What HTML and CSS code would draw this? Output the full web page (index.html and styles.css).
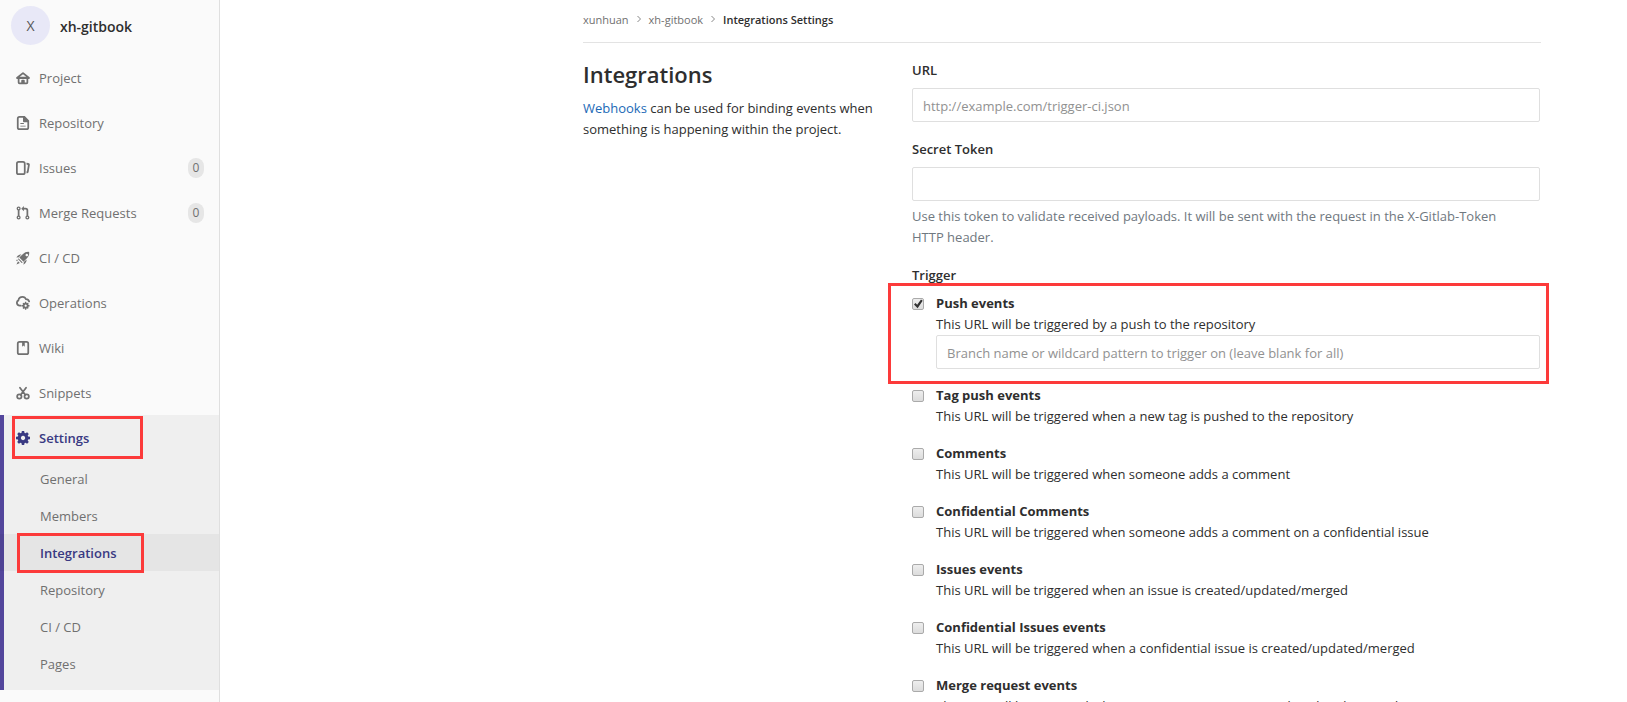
FILE: index.html
```html
<!DOCTYPE html>
<html lang="en">
<head>
<meta charset="utf-8">
<title>Integrations Settings · xh-gitbook</title>
<link rel="stylesheet" href="styles.css">
</head>
<body>
<div class="layout">
  <aside class="sidebar">
    <a class="project-header" href="#"><span class="avatar">X</span><span class="project-name">xh-gitbook</span></a>
    <nav>
      <ul class="menu">
        <li><a class="menu-link" href="#"><svg class="icon" viewBox="0 0 16 16"><path fill-rule="evenodd" d="M8.7 1.6 15.6 7.2Q16.4 8.6 15 9H14v4a2 2 0 0 1-2 2H4a2 2 0 0 1-2-2V9H1Q-.4 8.6.4 7.2L7.3 1.6Q8 1.1 8.7 1.6ZM4.3 6.7h7.4L8 3.7ZM4 9v4h2v-2q0-1 1-1h2q1 0 1 1v2h2V9Z"/></svg>Project</a></li>
        <li><a class="menu-link" href="#"><svg class="icon" viewBox="0 0 16 16"><path fill-rule="evenodd" d="M4 0h6l5 5v8a3 3 0 0 1-3 3H4a3 3 0 0 1-3-3V3a3 3 0 0 1 3-3Zm0 2a1 1 0 0 0-1 1v10q0 1 1 1h8q1 0 1-1V7H9a1 1 0 0 1-1-1V2ZM5 8h4v1H5Zm0 3h6v1H5Z"/></svg>Repository</a></li>
        <li><a class="menu-link" href="#"><svg class="icon" viewBox="0 0 16 16"><path fill-rule="evenodd" d="M3 0h5a3 3 0 0 1 3 3v10a3 3 0 0 1-3 3H3a3 3 0 0 1-3-3V3a3 3 0 0 1 3-3Zm0 2a1 1 0 0 0-1 1v10q0 1 1 1h5q1 0 1-1V3q0-1-1-1ZM12 2l2 .4a2 2 0 0 1 1.7 2.4l-1.3 7.7A2 2 0 0 1 12 14v-2.1q.5 0 .6-.7l1-6q.1-.8-.7-1L12 4Z"/></svg>Issues<span class="count">0</span></a></li>
        <li><a class="menu-link" href="#"><svg class="icon" viewBox="0 0 16 16"><g fill="none" stroke="currentColor" stroke-width="1.5"><circle cx="3" cy="2.8" r="1.6"/><circle cx="3" cy="13.2" r="1.6"/><circle cx="13" cy="13.2" r="1.6"/></g><path d="M2 4.5h2v7H2ZM9 0v2h2a3 3 0 0 1 3 3v6.5h-2V5q0-1-1-1H9v2L6 3Z"/></svg>Merge Requests<span class="count">0</span></a></li>
        <li><a class="menu-link" href="#"><svg class="icon" viewBox="0 0 16 16"><path fill-rule="evenodd" d="M8 3.3Q10.8.6 15 1q.6 4.2-2.2 7L8.6 12.2 3.8 7.4ZM12.3 3.1a1.5 1.5 0 1 0 .1 0ZM4 4.2l2.2-.4L3.3 7 .4 7.5Q1.8 5 4 4.2ZM12.2 9.8l-.4 2.2q-.8 2.2-3.3 3.6L9 12.7ZM2.8 8.3l4.9 4.9-1.2.4-4.1-4.1ZM2.3 11.6l2.1 2.1-3.9 1.8ZM.2 10.7l1-1 .9.9-1 1Z"/></svg>CI / CD</a></li>
        <li><a class="menu-link" href="#"><svg class="icon" viewBox="0 0 16 16"><path fill="none" stroke="currentColor" stroke-width="2" stroke-linecap="round" d="M5.5 11H4.2A3.2 3.2 0 0 1 2.7 5Q3.5 1 7.5 1 10.4 1 11.4 3.7 14.3 3.7 15 6.3"/><path fill-rule="evenodd" d="M10.3 6.7h1.4l.4 1.5 1.3-.6 1.1 1.1-.7 1.3 1.6.4v1.5l-1.6.4.7 1.4-1.1 1-1.3-.6-.4 1.6h-1.4l-.4-1.6-1.4.7-1-1.1.7-1.4-1.6-.4v-1.5l1.6-.4-.7-1.3 1-1.1 1.4.6Zm.7 3.1a1.3 1.3 0 1 0 .1 0Z"/></svg>Operations</a></li>
        <li><a class="menu-link" href="#"><svg class="icon" viewBox="0 0 16 16"><path fill-rule="evenodd" d="M4 0h8a3 3 0 0 1 3 3v10a3 3 0 0 1-3 3H4a3 3 0 0 1-3-3V3a3 3 0 0 1 3-3Zm0 2a1 1 0 0 0-1 1v10q0 1 1 1h8q1 0 1-1V3q0-1-1-1h-2v4.5L8.5 5 7 6.5V2Z"/></svg>Wiki</a></li>
        <li><a class="menu-link" href="#"><svg class="icon" viewBox="0 0 16 16"><g fill="none" stroke="currentColor" stroke-width="2"><circle cx="3.8" cy="12" r="2.5"/><circle cx="12.2" cy="12" r="2.5"/><path stroke-linecap="round" d="M4.5 2 10.6 10M11.5 2 5.4 10"/></g></svg>Snippets</a></li>
        <li class="section-active">
          <a class="menu-link current marked" href="#"><svg class="icon" viewBox="0 0 16 16"><path fill-rule="evenodd" d="M6.7 0h2.6l.5 2.2 1 .4 1.9-1.2 1.9 1.9-1.2 1.9.4 1 2.2.5v2.6l-2.2.5-.4 1 1.2 1.9-1.9 1.9-1.9-1.2-1 .4-.5 2.2H6.7l-.5-2.2-1-.4-1.9 1.2-1.9-1.9 1.2-1.9-.4-1L0 9.3V6.7l2.2-.5.4-1-1.2-1.9 1.9-1.9 1.9 1.2 1-.4ZM8 5.5a2.5 2.5 0 1 0 .1 0Z"/></svg>Settings</a>
          <ul class="submenu">
            <li><a href="#">General</a></li>
            <li><a href="#">Members</a></li>
            <li><a class="current marked" href="#">Integrations</a></li>
            <li><a href="#">Repository</a></li>
            <li><a href="#">CI / CD</a></li>
            <li><a href="#">Pages</a></li>
          </ul>
        </li>
      </ul>
    </nav>
  </aside>

  <main class="content">
    <nav class="breadcrumbs" aria-label="Breadcrumb">
      <a href="#">xunhuan</a>
      <svg class="chevron" viewBox="0 0 6 8"><path d="M1.5 1 4.5 4 1.5 7"/></svg>
      <a href="#">xh-gitbook</a>
      <svg class="chevron" viewBox="0 0 6 8"><path d="M1.5 1 4.5 4 1.5 7"/></svg>
      <span class="here">Integrations Settings</span>
    </nav>
    <div class="settings">
      <section class="intro">
        <h1>Integrations</h1>
        <p><a href="#">Webhooks</a> can be used for binding events when something is happening within the project.</p>
      </section>
      <form class="hook-form">
        <div class="field">
          <label class="field-label" for="url">URL</label>
          <input class="text-box" id="url" type="text" placeholder="http://example.com/trigger-ci.json">
        </div>
        <div class="field">
          <label class="field-label" for="token">Secret Token</label>
          <input class="text-box" id="token" type="text">
          <p class="help">Use this token to validate received payloads. It will be sent with the request in the X-Gitlab-Token HTTP header.</p>
        </div>
        <fieldset class="triggers">
          <legend class="field-label">Trigger</legend>
          <div class="event marked">
            <input type="checkbox" id="push" checked>
            <div class="event-body"><label for="push">Push events</label><p>This URL will be triggered by a push to the repository</p>
              <input class="text-box" type="text" aria-label="Branch filter" placeholder="Branch name or wildcard pattern to trigger on (leave blank for all)"></div>
          </div>
          <div class="event"><input type="checkbox" id="tag"><div class="event-body"><label for="tag">Tag push events</label><p>This URL will be triggered when a new tag is pushed to the repository</p></div></div>
          <div class="event"><input type="checkbox" id="comments"><div class="event-body"><label for="comments">Comments</label><p>This URL will be triggered when someone adds a comment</p></div></div>
          <div class="event"><input type="checkbox" id="conf-comments"><div class="event-body"><label for="conf-comments">Confidential Comments</label><p>This URL will be triggered when someone adds a comment on a confidential issue</p></div></div>
          <div class="event"><input type="checkbox" id="issues"><div class="event-body"><label for="issues">Issues events</label><p>This URL will be triggered when an issue is created/updated/merged</p></div></div>
          <div class="event"><input type="checkbox" id="conf-issues"><div class="event-body"><label for="conf-issues">Confidential Issues events</label><p>This URL will be triggered when a confidential issue is created/updated/merged</p></div></div>
          <div class="event"><input type="checkbox" id="merge"><div class="event-body"><label for="merge">Merge request events</label><p>This URL will be triggered when a merge request is created/updated/merged</p></div></div>
        </fieldset>
      </form>
    </div>
  </main>
</div>
</body>
</html>
```
FILE: styles.css
```css
*, *::before, *::after { box-sizing: border-box; }
body {
  margin: 0;
  background: #fff;
  color: #2e2e2e;
  font: 13px/21px "Open Sans", "Noto Sans", sans-serif;
}
a { color: inherit; text-decoration: none; }
ul { margin: 0; padding: 0; list-style: none; }
p { margin: 0; }

.layout { display: flex; height: 100vh; overflow: hidden; }

/* Sidebar */
.sidebar {
  flex: 0 0 220px;
  background: #fafafa;
  border-right: 1px solid #dfdfdf;
  color: #707070;
}
.project-header {
  display: flex;
  align-items: center;
  gap: 10px;
  height: 55px;
  padding: 0 11px 4px;
}
.avatar {
  width: 39px;
  height: 39px;
  border-radius: 50%;
  background: #e8e8f7;
  color: #555;
  font-size: 14px;
  line-height: 39px;
  text-align: center;
}
.project-name { padding-top: 2px; color: #2e2e2e; font-size: 14px; font-weight: 600; }
.menu-link {
  display: flex;
  align-items: center;
  height: 45px;
  padding: 1px 15px 0 16px;
}
.icon { width: 14px; height: 14px; margin-right: 9px; fill: currentColor; }
.count {
  width: 16px;
  height: 20px;
  margin-left: auto;
  border-radius: 8px;
  background: #e6e6e6;
  font-size: 12px;
  line-height: 20px;
  text-align: center;
}
.section-active {
  padding-bottom: 8px;
  background: #efefef;
  box-shadow: inset 4px 0 #53469c;
}
.submenu a { display: block; padding: 9px 16px 7px 40px; }
.submenu .current { background: rgba(0, 0, 0, .04); }
.current { color: #393982; font-weight: 600; }

/* Red marker frames */
.marked { position: relative; }
.marked::after {
  content: "";
  position: absolute;
  border: 3px solid #fc3a3a;
  pointer-events: none;
}
.menu-link.marked::after { inset: 1px auto 1px 12px; width: 131px; }
.submenu .marked::after { inset: -1px auto -2px 17px; width: 127px; }
.event.marked::after { inset: -10px -9px -15px -24px; }

/* Main column */
.content {
  flex: 1;
  max-width: 1044px;
  margin-left: auto;
  padding-right: 86px;
}
.breadcrumbs {
  display: flex;
  align-items: center;
  gap: 7px;
  height: 43px;
  padding-bottom: 4px;
  border-bottom: 1px solid #e3e3e3;
  color: #707070;
  font-size: 11px;
}
.chevron { width: 6px; height: 8px; fill: none; stroke: #888; }
.here { color: #2e2e2e; font-weight: 600; }
.settings {
  display: grid;
  grid-template-columns: 305px 1fr;
  gap: 24px;
  padding: 17px 1px 0 0;
}
h1 { margin: 0 0 10px; font-size: 22px; font-weight: 600; line-height: 28px; }
.intro a { color: #1b69b6; }
.field { margin-bottom: 17px; }
.field-label { display: block; padding: 0; margin-bottom: 7px; font-weight: 600; }
.text-box {
  display: block;
  width: 100%;
  height: 34px;
  padding: 7px 10px 5px;
  border: 1px solid #dfdfdf;
  border-radius: 2px;
  background: #fff;
  color: #2e2e2e;
  font: inherit;
}
.text-box::placeholder { color: #919191; }
.help { margin-top: 5px; padding-right: 24px; color: #707880; }
.triggers { margin: 0; padding: 0; border: 0; }
.event { display: flex; gap: 12px; margin-bottom: 16px; }
.event-body { flex: 1; }
.event label { display: block; font-weight: 700; }
.event input[type="checkbox"] {
  appearance: none;
  width: 12px;
  height: 12px;
  margin: 5px 0;
  border: 1px solid #aaa;
  border-radius: 2px;
  background: linear-gradient(#eee, #dcdcdc);
}
.event input[type="checkbox"]:checked::before {
  content: "";
  display: block;
  width: 10px;
  height: 10px;
  background: #333;
  clip-path: polygon(10% 55%, 25% 40%, 42% 58%, 80% 5%, 97% 18%, 46% 92%);
}
```
